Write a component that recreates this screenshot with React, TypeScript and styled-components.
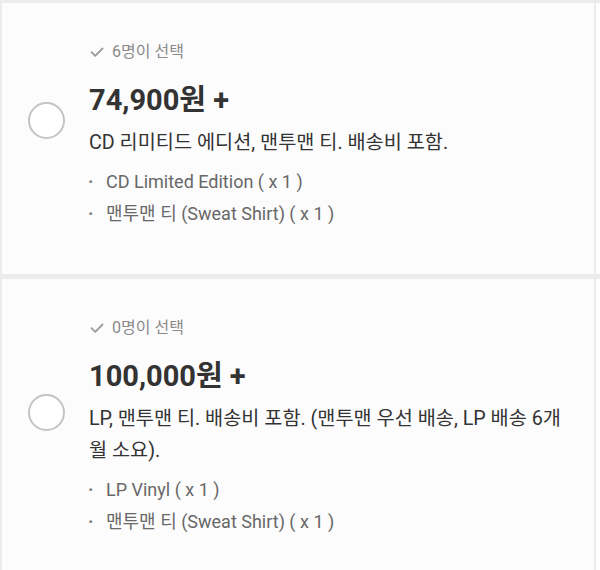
import React from "react";
import styled, { createGlobalStyle } from "styled-components";

const GlobalStyle = createGlobalStyle`
  html, body {
    margin: 0;
    padding: 0;
    background: #ffffff;
  }
  body {
    font-family: Roboto, "Noto Sans CJK KR", "Noto Sans", sans-serif;
    -webkit-font-smoothing: antialiased;
  }
`;

const Page = styled.div`
  width: 600px;
  display: flex;
  flex-direction: column;
`;

const Divider = styled.div<{ $h: number }>`
  height: ${(p) => p.$h}px;
  background: #ececec;
`;

const Card = styled.div`
  width: 566px;
  border-left: 2px solid #ebebeb;
  border-right: 2px solid #ebebeb;
  background: #fcfcfc;
  display: flex;
  align-items: center;
  padding: 39px 0 44px 26px;
`;

const Radio = styled.div`
  width: 33px;
  height: 33px;
  border: 2px solid #c4c4c4;
  border-radius: 50%;
  flex-shrink: 0;
  margin-bottom: 32px;
  background: #ffffff;
`;

const Content = styled.div`
  margin-left: 24px;
  flex: 1;
  min-width: 0;
  padding-right: 22px;
  display: flex;
  flex-direction: column;
`;

const Picked = styled.div`
  display: flex;
  align-items: center;
  gap: 8px;
  font-size: 16px;
  line-height: 20px;
  color: #8a8a8a;
  margin-left: 1px;
`;

const Price = styled.div`
  margin-top: 20px;
  font-size: 29px;
  line-height: 36px;
  font-weight: 700;
  color: #333333;
`;

const Desc = styled.div`
  margin-top: 9px;
  font-size: 19.7px;
  line-height: 32px;
  color: #333333;
`;

const Items = styled.ul`
  list-style: none;
  margin: 7px 0 0 0;
  padding: 0;
`;

const Item = styled.li`
  position: relative;
  padding-left: 17px;
  font-size: 18px;
  line-height: 32px;
  color: #686868;
  &::before {
    content: "·";
    position: absolute;
    left: -1px;
    top: 0;
    color: #777;
    font-weight: 700;
  }
`;

const Check = () => (
  <svg width="14" height="12" viewBox="0 0 14 12">
    <path d="M1.5 6.2 L5.2 9.8 L12.5 2.5" fill="none" stroke="#9a9a9a" strokeWidth="1.8" strokeLinecap="round" strokeLinejoin="round" />
  </svg>
);

type Option = {
  picked: number;
  price: string;
  desc: string;
  items: string[];
};

const options: Option[] = [
  {
    picked: 6,
    price: "74,900원 +",
    desc: "CD 리미티드 에디션, 맨투맨 티. 배송비 포함.",
    items: ["CD Limited Edition ( x 1 )", "맨투맨 티 (Sweat Shirt) ( x 1 )"],
  },
  {
    picked: 0,
    price: "100,000원 +",
    desc: "LP, 맨투맨 티. 배송비 포함. (맨투맨 우선 배송, LP 배송 6개월 소요).",
    items: ["LP Vinyl ( x 1 )", "맨투맨 티 (Sweat Shirt) ( x 1 )"],
  },
];

export default function App() {
  return (
    <>
      <GlobalStyle />
      <Page>
        <Divider $h={3} />
        {options.map((o, i) => (
          <React.Fragment key={i}>
            {i > 0 && <Divider $h={5} />}
            <Card>
              <Radio />
              <Content>
                <Picked>
                  <Check />
                  <span>{o.picked}명이 선택</span>
                </Picked>
                <Price>{o.price}</Price>
                <Desc>{o.desc}</Desc>
                <Items>
                  {o.items.map((it) => (
                    <Item key={it}>{it}</Item>
                  ))}
                </Items>
              </Content>
            </Card>
          </React.Fragment>
        ))}
      </Page>
    </>
  );
}
